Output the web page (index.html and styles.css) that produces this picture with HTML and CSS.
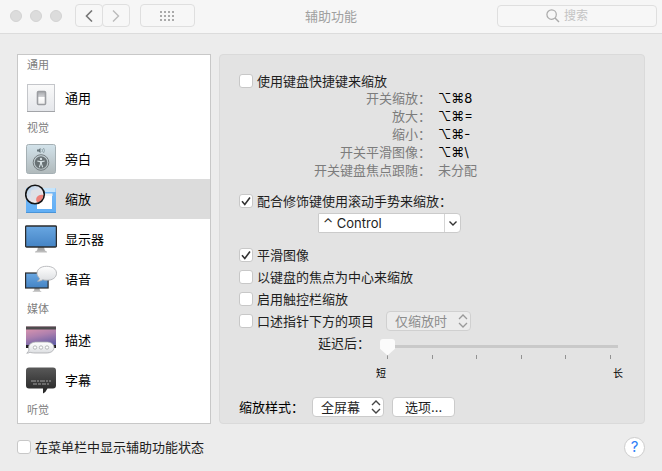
FILE: index.html
```html
<!DOCTYPE html>
<html lang="zh-CN">
<head>
    <meta charset="UTF-8">
    <meta name="viewport" content="width=device-width, initial-scale=1.0">
    <title>辅助功能</title>
    <link rel="stylesheet" href="styles.css">
</head>
<body>
    <!-- 工具栏 -->
    <header class="toolbar">
        <div class="toolbar-left">
            <div class="lights"><span></span><span></span><span></span></div>
            <div class="segment">
                <button type="button" class="tool-btn" aria-label="后退">
                    <svg width="8" height="12" viewBox="0 0 8 12"><path d="M7 .5 1.5 6 7 11.5" fill="none" stroke="#777" stroke-width="1.6"/></svg>
                </button>
                <button type="button" class="tool-btn" aria-label="前进">
                    <svg width="8" height="12" viewBox="0 0 8 12"><path d="M1 .5 6.5 6 1 11.5" fill="none" stroke="#bbb" stroke-width="1.4"/></svg>
                </button>
            </div>
            <button type="button" class="tool-btn wide" aria-label="显示全部">
                <svg width="15" height="10" viewBox="0 0 15 10" fill="#aaa">
                    <path d="M0 0h2v2H0zM4 0h2v2H4zM8 0h2v2H8zM12 0h2v2h-2zM0 4h2v2H0zM4 4h2v2H4zM8 4h2v2H8zM12 4h2v2h-2zM0 8h2v2H0zM4 8h2v2H4zM8 8h2v2H8zM12 8h2v2h-2z"/>
                </svg>
            </button>
        </div>
        <h1>辅助功能</h1>
        <div class="search">
            <input type="search" placeholder="搜索" aria-label="搜索">
            <svg width="14" height="14" viewBox="0 0 14 14" fill="none" stroke="#aaa"><circle cx="5.6" cy="5.6" r="4.7" stroke-width="1.2"/><path d="M9 9l4 4" stroke-width="1.4"/></svg>
        </div>
    </header>

    <main class="content">
        <!-- 侧边栏 -->
        <nav class="sidebar">
            <h2>通用</h2>
            <a href="#general" class="item">
                <svg width="32" height="32" viewBox="0 0 32 32">
                    <defs>
                        <linearGradient id="plate" x2="0" y2="1"><stop stop-color="#fafafa"/><stop offset="1" stop-color="#e4e6ea"/></linearGradient>
                        <linearGradient id="knob" x2="0" y2="1"><stop stop-color="#a5a7ab"/><stop offset=".4" stop-color="#d0d1d4"/><stop offset=".45" stop-color="#fff"/><stop offset="1" stop-color="#eee"/></linearGradient>
                    </defs>
                    <rect x="2.5" y="2.5" width="27" height="27" fill="url(#plate)" stroke="#c4c6ca"/>
                    <path d="M2 29.5h28" stroke="#a2a4a8"/>
                    <rect x="12.5" y="9.5" width="8" height="13" rx="1" fill="url(#knob)" stroke="#9b9da1" stroke-width="1.6"/>
                </svg>
                通用
            </a>
            <h2>视觉</h2>
            <a href="#voiceover" class="item">
                <svg width="32" height="32" viewBox="0 0 32 32">
                    <defs><linearGradient id="vo" x2="0" y2="1"><stop stop-color="#d3e3eb"/><stop offset="1" stop-color="#b0b9bb"/></linearGradient></defs>
                    <rect x="1.5" y="1.5" width="29" height="29" rx="2" fill="url(#vo)" stroke="#a5b0b4"/>
                    <path d="M12 6.500h1.500l2-1.500v5l-2-1.500H12z" fill="#68777d"/>
                    <path d="M17 6q1 1.500 0 3M18.500 5q2 2.500 0 5" fill="none" stroke="#80949b" stroke-width=".8"/>
                    <circle cx="16" cy="19.500" r="7.800" fill="none" stroke="#737b7e" stroke-width="1"/>
                    <circle cx="16" cy="19.500" r="6.200" fill="#687174"/>
                    <circle cx="16" cy="16" r="1.200" fill="#d5dfe2"/>
                    <path d="M12.300 18l2.700.6h2l2.700-.6M15.500 19v2l-1.200 3.200M16.500 19v2l1.200 3.200" fill="none" stroke="#d5dfe2" stroke-width="1.100"/>
                </svg>
                旁白
            </a>
            <a href="#zoom" class="item active">
                <svg width="32" height="32" viewBox="0 0 32 32">
                    <defs><linearGradient id="win" x2="0" y2="1"><stop stop-color="#78b9f5"/><stop offset="1" stop-color="#60aef5"/></linearGradient>
                    <linearGradient id="lens" x2="1" y2="1"><stop stop-color="#a9cfee"/><stop offset=".6" stop-color="#eee6e8"/><stop offset="1" stop-color="#f7f7f7"/></linearGradient></defs>
                    <rect x="1" y="5" width="30" height="25" rx="1" fill="url(#win)"/>
                    <path d="M16 5h14.500v4H16z" fill="#c6e4fa"/>
                    <path d="M1 29.500h30" stroke="#4a94d8"/>
                    <path d="M12 13h15v13H12z" fill="#fff"/>
                    <path d="M19 10.500h8.500V13H19z" fill="#f2f2f2"/>
                    <circle cx="10" cy="11.500" r="9.300" fill="url(#lens)"/>
                    <path d="M6 9q0-2 2-2h8l1 4-4 7-7-1z" fill="#dfe0e5"/>
                    <path d="M11.500 18.500c-1.500-4 2-7.500 7-6.500a9 9 0 0 1-5.500 7.500z" fill="#ed7f78"/>
                    <circle cx="10" cy="11.500" r="9.300" fill="none" stroke="#151515" stroke-width="1.600"/>
                </svg>
                缩放
            </a>
            <a href="#display" class="item">
                <svg width="32" height="32" viewBox="0 0 32 32">
                    <defs><linearGradient id="scr" x2="0" y2="1"><stop stop-color="#69a7e2"/><stop offset="1" stop-color="#4483c4"/></linearGradient></defs>
                    <path d="M13 24h6l1 4h-8z" fill="#aaa"/>
                    <path d="M10 29.500q0-2 3-2h6q3 0 3 2z" fill="#bbb"/>
                    <rect x=".6" y="3" width="30.800" height="21" rx="1" fill="url(#scr)" stroke="#2b2c2e" stroke-width="1.300"/>
                </svg>
                显示器
            </a>
            <a href="#speech" class="item">
                <svg width="32" height="32" viewBox="0 0 32 32">
                    <defs><linearGradient id="bub" x2="0" y2="1"><stop stop-color="#fff"/><stop offset="1" stop-color="#dcdee1"/></linearGradient></defs>
                    <path d="M9.500 25h5l.5 3H9z" fill="#aaa"/>
                    <path d="M7.500 29q0-1.500 2-1.500h5q2 0 2 1.500z" fill="#ccc"/>
                    <rect x=".6" y="10" width="22.500" height="15" fill="url(#scr)" stroke="#2b2c2e" stroke-width="1.200"/>
                    <path d="M21.500 3.300c6 0 10 2.800 10 7s-4 7-9.500 7c-1.500 0-3-.2-4.200-.6-1.600 1-3.500 1.600-5.300 1.500 1.200-.8 2-1.800 2-3-1.600-1.300-2.500-3-2.500-4.900 0-4.200 4-7 9.500-7z" fill="url(#bub)" stroke="#a9abae" stroke-width=".8"/>
                </svg>
                语音
            </a>
            <h2>媒体</h2>
            <a href="#descriptions" class="item">
                <svg width="32" height="32" viewBox="0 0 32 32">
                    <defs><linearGradient id="sunset" x2=".3" y2="1"><stop stop-color="#e499ae"/><stop offset=".5" stop-color="#ae80ae"/><stop offset="1" stop-color="#625da4"/></linearGradient></defs>
                    <path d="M1 2.500h30V24H1z" fill="url(#sunset)"/>
                    <path d="M1 2.500h30v3H1z" fill="#4d4b4d"/>
                    <path d="M1 21h30v3H1z" fill="#1c1b1e"/>
                    <path d="M12 18h9c5 0 8 2 8 5.500S26 29 21 29H10c-2 0-4-.3-5-.8-.8.6-2 1-3.300 1 1-.8 2-1.900 2.300-3.200-.3-.7-.4-1.600-.4-2.500 0-3.500 3.400-5.500 8.400-5.500z" fill="url(#bub)" stroke="#a9abae" stroke-width=".8"/>
                    <g fill="#fff" stroke="#a5a7aa" stroke-width=".8"><circle cx="10" cy="23.500" r="1.700"/><circle cx="16" cy="23.500" r="1.700"/><circle cx="22" cy="23.500" r="1.700"/></g>
                </svg>
                描述
            </a>
            <a href="#captions" class="item">
                <svg width="32" height="32" viewBox="0 0 32 32">
                    <defs><linearGradient id="cap" x2="0" y2="1"><stop stop-color="#595959"/><stop offset="1" stop-color="#232323"/></linearGradient></defs>
                    <path d="M4 3.500h24q3 0 3 3v15q0 3-3 3h-5.500q-1.500 3.500-4.500 5v-5H4q-3 0-3-3v-15q0-3 3-3z" fill="url(#cap)"/>
                    <path d="M6 17h20" stroke="#bbb" stroke-width=".8" stroke-dasharray="5 1 2 1"/>
                    <path d="M8 20h16" stroke="#bbb" stroke-width=".8" stroke-dasharray="4 1 3 1"/>
                </svg>
                字幕
            </a>
            <h2>听觉</h2>
        </nav>

        <!-- 缩放设置 -->
        <section class="panel">
            <label class="check">
                <span class="box"><input type="checkbox"><svg width="10" height="10" viewBox="0 0 10 10"><path d="M1 5.300 3.800 8.500 9 1.500"/></svg></span>
                使用键盘快捷键来缩放
            </label>
            <dl class="shortcuts">
                <dt>开关缩放：</dt><dd>⌥⌘8</dd>
                <dt>放大：</dt><dd>⌥⌘=</dd>
                <dt>缩小：</dt><dd>⌥⌘-</dd>
                <dt>开关平滑图像：</dt><dd>⌥⌘\</dd>
                <dt>开关键盘焦点跟随：</dt><dd class="unset">未分配</dd>
            </dl>

            <label class="check">
                <span class="box"><input type="checkbox" checked><svg width="10" height="10" viewBox="0 0 10 10"><path d="M1 5.300 3.800 8.500 9 1.500"/></svg></span>
                配合修饰键使用滚动手势来缩放：
            </label>
            <div class="select combo">
                <select aria-label="修饰键"><option>⌃ Control</option></select>
                <svg width="17" height="18" viewBox="0 0 17 18"><path d="M.5 0v18" stroke="#d5d5d5"/><path d="M5.500 7.500 9 11l3.500-3.500" stroke="#333" stroke-width="1.400"/></svg>
            </div>

            <label class="check">
                <span class="box"><input type="checkbox" checked><svg width="10" height="10" viewBox="0 0 10 10"><path d="M1 5.300 3.800 8.500 9 1.500"/></svg></span>
                平滑图像
            </label>
            <label class="check">
                <span class="box"><input type="checkbox"><svg width="10" height="10" viewBox="0 0 10 10"><path d="M1 5.300 3.800 8.500 9 1.500"/></svg></span>
                以键盘的焦点为中心来缩放
            </label>
            <label class="check">
                <span class="box"><input type="checkbox"><svg width="10" height="10" viewBox="0 0 10 10"><path d="M1 5.300 3.800 8.500 9 1.500"/></svg></span>
                启用触控栏缩放
            </label>
            <div class="row">
                <label class="check">
                    <span class="box"><input type="checkbox"><svg width="10" height="10" viewBox="0 0 10 10"><path d="M1 5.300 3.800 8.500 9 1.500"/></svg></span>
                    口述指针下方的项目
                </label>
                <div class="select disabled">
                    <select aria-label="口述时机" disabled><option>仅缩放时</option></select>
                    <svg width="16" height="14" viewBox="0 0 16 14"><path d="M4 5l4-4 4 4M4 9l4 4 4-4" stroke="#999" stroke-width="1.300"/></svg>
                </div>
            </div>

            <div class="delay">
                <label for="delay">延迟后：</label>
                <div class="slider">
                    <input type="range" id="delay" min="0" max="5" value="0">
                    <div class="ticks"><i></i><i></i><i></i><i></i><i></i><i></i></div>
                    <div class="ends"><span>短</span><span>长</span></div>
                </div>
            </div>

            <div class="row style-row">
                <label for="style">缩放样式：</label>
                <div class="select">
                    <select id="style"><option>全屏幕</option></select>
                    <svg width="16" height="14" viewBox="0 0 16 14"><path d="M4 5l4-4 4 4M4 9l4 4 4-4" stroke="#444" stroke-width="1.400"/></svg>
                </div>
                <button type="button" class="btn">选项...</button>
            </div>
        </section>
    </main>

    <!-- 底部 -->
    <footer class="footer">
        <label class="check">
            <span class="box"><input type="checkbox"><svg width="10" height="10" viewBox="0 0 10 10"><path d="M1 5.300 3.800 8.500 9 1.500"/></svg></span>
            在菜单栏中显示辅助功能状态
        </label>
        <button type="button" class="help" aria-label="帮助">?</button>
    </footer>
</body>
</html>
```

FILE: styles.css
```css
/* 基本样式 */
* {
    box-sizing: border-box;
}

body {
    margin: 0;
    min-height: 100vh;
    background: #ececec;
    color: #1e1e1e;
    font-family: Inter, "Noto Sans CJK SC", sans-serif;
    font-size: 13px;
    line-height: 18px;
}

input,
select,
button {
    margin: 0;
    font: inherit;
    color: inherit;
}

svg {
    display: block;
    flex: none;
}

/* 工具栏 */
.toolbar {
    display: grid;
    grid-template-columns: 1fr auto 1fr;
    align-items: center;
    padding: 4px 5px 6px;
    background: #f6f6f6;
    border-bottom: 1px solid #dcdcdc;
}

.toolbar h1 {
    margin: 0;
    font-size: 13px;
    font-weight: normal;
    color: #a0a0a0;
}

.toolbar-left {
    display: flex;
    align-items: center;
    gap: 10px;
    padding-left: 5px;
}

.lights {
    display: flex;
    gap: 8px;
    margin-right: 3px;
}

.lights span {
    width: 12px;
    height: 12px;
    border-radius: 50%;
    background: #dcdcdc;
    border: 1px solid #d3d3d3;
}

.segment {
    display: flex;
}

.tool-btn {
    display: flex;
    align-items: center;
    justify-content: center;
    width: 28px;
    height: 23px;
    padding: 0;
    background: #f7f7f7;
    border: 1px solid #dfdfdf;
    border-radius: 4px;
}

.segment .tool-btn + .tool-btn {
    margin-left: -1px;
}

.tool-btn.wide {
    width: 55px;
}

.search {
    display: grid;
    justify-self: end;
    align-items: center;
    width: 160px;
}

.search input,
.search svg {
    grid-area: 1 / 1;
}

.search input {
    width: 100%;
    height: 22px;
    padding: 0 8px 0 66px;
    appearance: none;
    background: #f7f7f7;
    border: 1px solid #dfdfdf;
    border-radius: 4px;
    font-size: 12px;
}

.search input::placeholder {
    color: #c4c4c4;
}

.search svg {
    margin-left: 49px;
    pointer-events: none;
}

/* 主体 */
.content {
    display: flex;
    gap: 8px;
    padding: 20px 17px 0;
}

/* 侧边栏 */
.sidebar {
    flex: 0 0 194px;
    padding-bottom: 2px;
    background: #fff;
    border: 1px solid #c8c8c8;
}

.sidebar h2 {
    margin: 0;
    padding: 1px 9px 2px;
    font-size: 11px;
    font-weight: normal;
    color: #808080;
}

.sidebar h2:first-child {
    padding-bottom: 4px;
}

.item {
    display: flex;
    align-items: center;
    gap: 8px;
    height: 40px;
    padding: 0 7px;
    color: #000;
    text-decoration: none;
}

.item.active {
    background: #dcdcdc;
}

/* 设置面板 */
.panel {
    flex: 1;
    padding: 15px 26px 5px 19px;
    background: #e3e3e3;
    border: 1px solid #dadada;
    border-radius: 4px;
}

.check {
    display: flex;
    align-items: center;
    gap: 4px;
    height: 22px;
}

.box {
    display: grid;
    place-items: center;
}

.box input,
.box svg {
    grid-area: 1 / 1;
}

.box input {
    width: 14px;
    height: 14px;
    appearance: none;
    background: #fff;
    border: 1px solid #c8c8c8;
    border-radius: 3px;
}

.box svg {
    display: none;
    fill: none;
    stroke: #333;
    stroke-width: 1.6;
    pointer-events: none;
}

.box input:checked + svg {
    display: block;
}

.shortcuts {
    display: grid;
    grid-template-columns: 192px 1fr;
    column-gap: 7px;
    margin: -3px 0 0;
    padding-bottom: 11px;
}

.shortcuts dt {
    text-align: right;
    color: #7c7c7c;
}

.shortcuts dd {
    margin: 0;
    color: #000;
}

.shortcuts .unset {
    color: #7c7c7c;
}

/* 下拉菜单和按钮 */
.select {
    display: inline-grid;
    align-items: center;
}

.select select,
.select svg {
    grid-area: 1 / 1;
}

.select select,
.btn {
    height: 20px;
    appearance: none;
    background: #fff;
    border: 1px solid #cbcbcb;
    border-radius: 4px;
    line-height: 18px;
}

.select select {
    padding: 0 22px 0 8px;
}

.select svg {
    justify-self: end;
    fill: none;
    pointer-events: none;
}

.select.disabled select {
    background: #ececec;
    border-color: #d0d0d0;
    color: #8c8c8c;
    opacity: 1;
}

.select.combo {
    display: grid;
    width: 143px;
    margin: 1px 0 11px 79px;
}

.combo select {
    padding: 0 20px 0 4px;
    border-radius: 1px 4px 4px 1px;
}

.btn {
    padding: 0 12px;
}

.row {
    display: flex;
    align-items: center;
    gap: 12px;
}

/* 滑块 */
.delay {
    display: flex;
    gap: 10px;
    padding: 2px 0 15px 79px;
}

.slider {
    flex: 1;
    padding-top: 3px;
}

.slider input {
    display: block;
    width: 100%;
    height: 18px;
    appearance: none;
    background: linear-gradient(#c9c9c9, #c9c9c9) center / 100% 3px no-repeat;
}

.slider input::-webkit-slider-thumb {
    appearance: none;
    width: 15px;
    height: 17px;
    margin-top: 2px;
    background: #fbfbfb;
    border-radius: 3px;
    clip-path: polygon(0 0, 100% 0, 100% 60%, 50% 100%, 0 60%);
}

.ticks {
    display: flex;
    justify-content: space-between;
    padding: 0 7px;
}

.ticks i {
    width: 1px;
    height: 4px;
    background: #929292;
}

.ends {
    display: flex;
    justify-content: space-between;
    margin: 5px -5px 0 -4px;
    font-size: 10px;
    color: #000;
}

.style-row {
    gap: 8px;
}

.style-row label {
    color: #000;
}

/* 底部 */
.footer {
    display: flex;
    align-items: center;
    justify-content: space-between;
    padding: 12px 17px;
}

.help {
    width: 21px;
    height: 21px;
    padding: 0;
    background: #fff;
    border: 1px solid #cdcdcd;
    border-radius: 50%;
    color: #2f80f7;
    font-size: 15px;
    line-height: 18px;
}
```
